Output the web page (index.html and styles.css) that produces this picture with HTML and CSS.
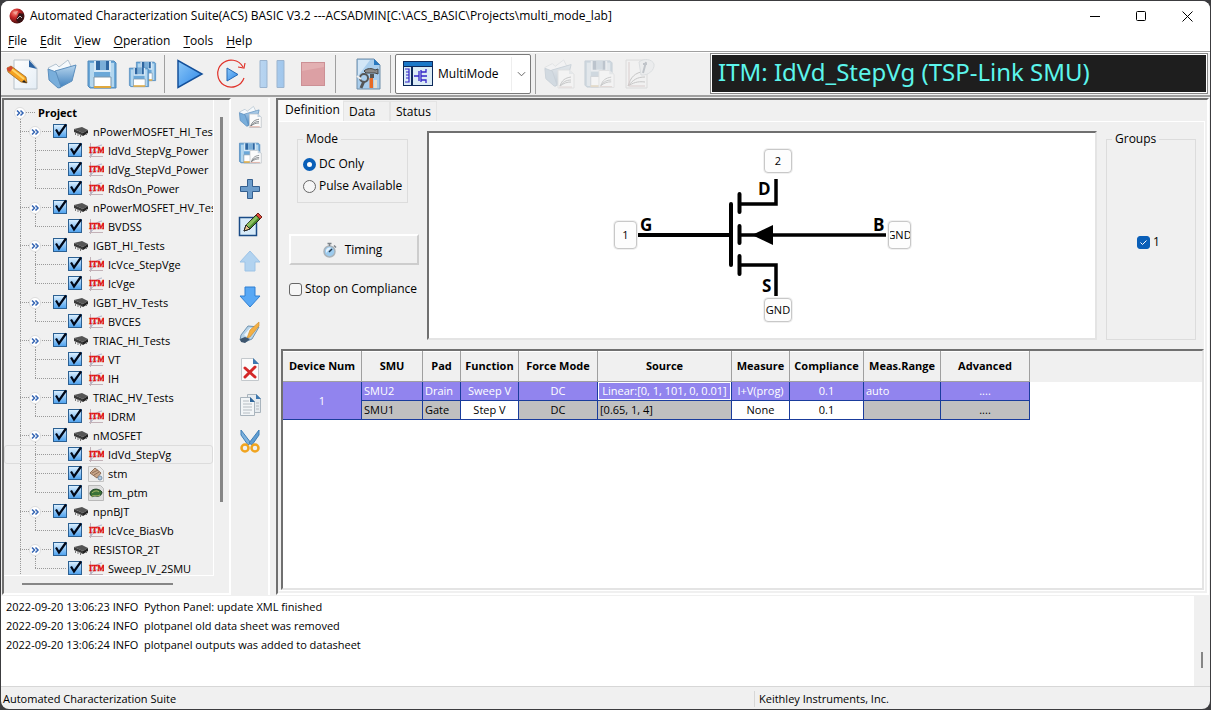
FILE: index.html
```html
<!DOCTYPE html>
<html lang="en">
<head>
<meta charset="utf-8">
<title>Automated Characterization Suite(ACS) BASIC V3.2</title>
<link rel="stylesheet" href="styles.css">
</head>
<body>
<svg class="defs" aria-hidden="true">
  <defs>
    <linearGradient id="gBlue" x1="0" y1="0" x2="1" y2="1"><stop offset="0" stop-color="#8cc8f8"/><stop offset="1" stop-color="#2c86e8"/></linearGradient>
    <linearGradient id="gSteel" x1="0" y1="0" x2="0" y2="1"><stop offset="0" stop-color="#b8d6ee"/><stop offset="1" stop-color="#3d7fbd"/></linearGradient>
    <linearGradient id="gPale" x1="0" y1="0" x2="1" y2="0"><stop offset="0" stop-color="#b9d5f0"/><stop offset="1" stop-color="#a0c6ec"/></linearGradient>
    <linearGradient id="gPaper" x1="0" y1="0" x2="1" y2="1"><stop offset="0" stop-color="#ffffff"/><stop offset="1" stop-color="#e4edf5"/></linearGradient>
    <radialGradient id="gBall" cx=".35" cy=".3" r=".8"><stop offset="0" stop-color="#ff8a7a"/><stop offset=".4" stop-color="#c52626"/><stop offset="1" stop-color="#2a0808"/></radialGradient>
  </defs>
  <symbol id="floppy" viewBox="0 0 32 32">
    <path d="M2 3h26l2 2v25H4l-2-2z" fill="#6ba8d8" stroke="#4f88bb"/>
    <path d="M4 5h4v24H5l-1-1zM24 5h4v24h-4z" fill="#b4d7ef"/>
    <path d="M8 3h17v11H8z" fill="#d5e8f6"/><path d="M10 3h4v9h-4zM20 3h3v9h-3z" fill="#2e66a0"/><path d="M14 3h6v9h-6z" fill="#7aaed8"/>
    <path d="M8 19h17v11H8z" fill="#fff" stroke="#7c97ad"/><path d="M8 28h17v2H8z" fill="#e0a83c"/>
  </symbol>
  <symbol id="folder" viewBox="0 0 32 32">
    <path d="M2 10l8-4 3 3 9-7 4 8-12 16z" fill="#f5f9fc" stroke="#b4c3d0"/>
    <path d="M9 13l21-6-4 16-13 7z" fill="url(#gSteel)" stroke="#5c8fbe"/>
    <path d="M2 11l8 3 5 15-3 1-9-8z" fill="#79aedb" stroke="#5c8fbe"/>
  </symbol>
  <symbol id="curves" viewBox="0 0 18 20">
    <path d="M1 1h11l5 4v14H1z" fill="#fbfbfb" stroke="#b9bfc4"/><path d="M12 1v4h5z" fill="#c4d4e2"/>
    <path d="M3 17c2-6 5-8 11-9M3 17c3-4 6-6 11-6M3 17c4-3 7-4 11-4" fill="none" stroke="#666c72"/><path d="M2 18h13" stroke="#d99a8c"/>
  </symbol>
  <symbol id="folderCurves" viewBox="0 0 32 32"><use href="#folder" width="30" height="30"/><use href="#curves" x="14" y="11" width="18" height="20"/></symbol>
  <symbol id="floppyCurves" viewBox="0 0 32 32"><use href="#floppy" width="31" height="31"/><use href="#curves" x="15" y="11" width="17" height="20"/></symbol>
  <symbol id="expand" viewBox="0 0 12 12">
    <circle cx="6" cy="6" r="5.500" fill="#fff" stroke="#dcdcdc"/>
    <path d="M3 3.500L5.500 6 3 8.500M6.500 3.500L9 6 6.500 8.500" fill="none" stroke="#3566b4" stroke-width="1.500"/>
  </symbol>
  <symbol id="chip" viewBox="0 0 16 12">
    <path d="M1 3l8-2 6 3-5 3z" fill="#555"/><path d="M1 3l9 4v3L1 6z" fill="#3a3a3a"/><path d="M10 7l5-3v3l-5 3z" fill="#222"/>
    <path d="M2.500 6v3M5 7v3M7.500 8v3M13.500 7v2" stroke="#777"/>
  </symbol>
  <symbol id="itm" viewBox="0 0 16 16">
    <path d="M2.500 0v15M1 13.500h14" stroke="#c3b2b8"/><path d="M3 13C5 6 8 3 14 2M3 13c4-5 7-5 12-5" fill="none" stroke="#b4b4c8"/>
    <text x="1" y="10" class="itm-text">ITM</text>
  </symbol>
  <symbol id="stm" viewBox="0 0 16 16"><path d="M.5.5h11l4 4v11H.5z" fill="#ececec" stroke="#c4c4c4"/><path d="M7 2l6 5-4 5-7-5z" fill="#c8a68a" stroke="#8f6e57"/><path d="M4 7l6-3M6 9l5-3" stroke="#8f6e57"/><circle cx="12" cy="12" r="2" fill="#b8cadc" stroke="#7793ae"/></symbol>
  <symbol id="ptm" viewBox="0 0 16 16"><path d="M.5.5h12l3 3v12H.5z" fill="#dedede" stroke="#b8b8b8"/><path d="M2 9c0-5 8-7 12-2 0 3-3 5-6 4-2 0-3 0-4 1z" fill="#3b7237" stroke="#1f3f25"/><path d="M4 8c2-2 5-3 7-1M3 12c3-3 6 0 9-2" fill="none" stroke="#b5bf6c"/></symbol>
</svg>

<div class="window">
  <header class="titlebar">
    <svg class="app-icon" viewBox="0 0 16 16"><circle cx="8" cy="8" r="7.500" fill="url(#gBall)"/><path d="M10 5l5 1-1 6-4 3-3-3z" fill="#331214"/><path d="M4 4l5-1-2 4z" fill="#f0a397"/><path d="M8 11l3-3 2 2" stroke="#bbb" fill="none"/></svg>
    <h1 class="title">Automated Characterization Suite(ACS) BASIC V3.2 ---ACSADMIN[C:\ACS_BASIC\Projects\multi_mode_lab]</h1>
    <div class="controls">
      <button class="control" aria-label="Minimize"><svg viewBox="0 0 11 11"><path d="M0 5.500h10"/></svg></button>
      <button class="control" aria-label="Maximize"><svg viewBox="0 0 11 11"><rect x=".5" y=".5" width="9" height="9" rx="1"/></svg></button>
      <button class="control" aria-label="Close"><svg viewBox="0 0 11 11"><path d="M.5.5l10 10M10.500.5l-10 10"/></svg></button>
    </div>
  </header>

  <nav class="menubar">
    <button class="menu"><u>F</u>ile</button>
    <button class="menu"><u>E</u>dit</button>
    <button class="menu"><u>V</u>iew</button>
    <button class="menu"><u>O</u>peration</button>
    <button class="menu"><u>T</u>ools</button>
    <button class="menu"><u>H</u>elp</button>
  </nav>

  <div class="toolbar">
    <div class="tools files">
      <button class="tool" aria-label="New"><svg viewBox="0 0 32 32"><path d="M8 2h16l7 8v21H8z" fill="url(#gPaper)" stroke="#b8c2ca"/><path d="M23 2l8 9-8-2z" fill="#2b62a0"/><path d="M1 10l4-2 15 11 1 6-6-1L2 14z" fill="#f5a11f" stroke="#7b4a10" stroke-width=".6"/><path d="M3 9l15 12" stroke="#ffd569" stroke-width="2"/><path d="M1 10l4-2 2 2-3 4-3-2z" fill="#d14a32"/><path d="M18 22l3 3-5-1z" fill="#222"/></svg></button>
      <button class="tool" aria-label="Open"><svg><use href="#folder"/></svg></button>
      <button class="tool" aria-label="Save"><svg><use href="#floppy"/></svg></button>
      <button class="tool" aria-label="Save all"><svg viewBox="0 0 32 32"><use href="#floppy" x="9" y="1" width="22" height="24"/><use href="#floppy" x="2" y="7" width="22" height="24"/></svg></button>
    </div>
    <div class="tools">
      <button class="tool" aria-label="Run"><svg viewBox="0 0 32 32"><path d="M4 2.500v27L28 16z" fill="url(#gBlue)" stroke="#14509a" stroke-width="1.500"/></svg></button>
      <button class="tool" aria-label="Repeat run"><svg viewBox="0 0 32 32"><path d="M28 9A13.500 13.500 0 1 0 29 20" fill="none" stroke="#e0342c" stroke-width="1.200"/><path d="M30 5l-1 5-6-1" fill="none" stroke="#e0342c" stroke-width="1.200"/><path d="M12 10v13l11-6.500z" fill="url(#gBlue)" stroke="#2468b4"/></svg></button>
      <button class="tool" aria-label="Pause"><svg viewBox="0 0 32 32"><path d="M4 2.500h7v27H4zM21 2.500h7v27h-7z" fill="url(#gPale)" stroke="#9bb4cf"/></svg></button>
      <button class="tool" aria-label="Stop"><svg viewBox="0 0 32 32"><rect x="4.500" y="4.500" width="23" height="23" fill="#dca0a4" stroke="#cc9095"/><path d="M5 13l22-4V5H5z" fill="#e3b0b2"/></svg></button>
    </div>
    <div class="tools setup">
      <button class="tool" aria-label="Preferences"><svg viewBox="0 0 32 32"><path d="M5 1h17l6 6v24H5z" fill="#a9cdec" stroke="#6f8da8"/><path d="M22 1v6h6z" fill="#2878c0"/><path d="M6 2h12L6 18z" fill="#d3e6f6"/><path d="M12 13c3-3 8-3 11-1l3-1v5l-3-1h-9z" fill="#8a8a8a" stroke="#444"/><path d="M18 16h4v4h-4z" fill="#555"/><path d="M17.500 20h3.500v10h-3.500z" fill="#e86b26"/><path d="M22 22h3v8h-3z" fill="#e8e0d0"/><circle cx="12" cy="20" r="4" fill="none" stroke="#555" stroke-width="2"/><path d="M12 23l-3 7" stroke="#555" stroke-width="3"/><path d="M5 18l4 3" stroke="#eee" stroke-width="2"/></svg></button>
    </div>
    <div class="mode-box">
      <label class="mode-picker">
        <svg class="mode-icon" viewBox="0 0 30 25"><rect x="0" y="0" width="30" height="25" fill="#0d2a5c"/><rect x="1" y="1" width="28" height="4" fill="#1b78c8"/><path d="M1 6h7v18H1zM10 6h19v18H10z" fill="#dcecf6"/><path d="M2 8h4v3H3h3v3H3h3v3H3h3v4H2" fill="none" stroke="#3327c8" stroke-width="1.200"/><path d="M11 15h5M16 10v10M18 9v12M18 11h5V8M18 15h6M18 19h5v3" fill="none" stroke="#3327c8" stroke-width="1.300"/></svg>
        <select class="mode-select" aria-label="Test mode"><option>MultiMode</option></select>
        <svg class="chevron" viewBox="0 0 10 6"><path d="M1 1l4 4 4-4"/></svg>
      </label>
    </div>
    <div class="tools dim">
      <button class="tool" aria-label="Open plot" disabled><svg><use href="#folderCurves"/></svg></button>
      <button class="tool" aria-label="Save plot" disabled><svg><use href="#floppyCurves"/></svg></button>
      <button class="tool" aria-label="Edit plot" disabled><svg viewBox="0 0 32 32"><path d="M3 2h21v28H3z" fill="#f4f4f4" stroke="#aaa"/><path d="M5 28c3-9 6-13 17-15M5 28c5-6 9-9 17-9M5 28c5-3 9-5 17-4" fill="none" stroke="#666"/><path d="M6 4v24h16" stroke="#c77" fill="none"/><path d="M16 4c5-4 13-3 15 2 1 6-6 12-13 11z" fill="#dbe6ee" stroke="#a3b4c2"/><path d="M23 4l-3 11M20 6h4" stroke="#4a6480" stroke-width="2"/></svg></button>
    </div>
    <output class="banner">ITM: IdVd_StepVg (TSP-Link SMU)</output>
  </div>

  <main class="main">
    <section class="tree-panel">
      <div class="tree-view">
        <ul class="tree">
          <li class="row root"><svg class="expand"><use href="#expand"/></svg><span>Project</span></li>
          <li class="row group"><svg class="expand"><use href="#expand"/></svg><label class="node"><input type="checkbox" class="tick" checked><svg class="icon"><use href="#chip"/></svg>nPowerMOSFET_HI_Tests</label></li>
          <li class="row leaf"><label class="node"><input type="checkbox" class="tick" checked><svg class="icon"><use href="#itm"/></svg>IdVd_StepVg_Power</label></li>
          <li class="row leaf"><label class="node"><input type="checkbox" class="tick" checked><svg class="icon"><use href="#itm"/></svg>IdVg_StepVd_Power</label></li>
          <li class="row leaf last"><label class="node"><input type="checkbox" class="tick" checked><svg class="icon"><use href="#itm"/></svg>RdsOn_Power</label></li>
          <li class="row group"><svg class="expand"><use href="#expand"/></svg><label class="node"><input type="checkbox" class="tick" checked><svg class="icon"><use href="#chip"/></svg>nPowerMOSFET_HV_Tests</label></li>
          <li class="row leaf last"><label class="node"><input type="checkbox" class="tick" checked><svg class="icon"><use href="#itm"/></svg>BVDSS</label></li>
          <li class="row group"><svg class="expand"><use href="#expand"/></svg><label class="node"><input type="checkbox" class="tick" checked><svg class="icon"><use href="#chip"/></svg>IGBT_HI_Tests</label></li>
          <li class="row leaf"><label class="node"><input type="checkbox" class="tick" checked><svg class="icon"><use href="#itm"/></svg>IcVce_StepVge</label></li>
          <li class="row leaf last"><label class="node"><input type="checkbox" class="tick" checked><svg class="icon"><use href="#itm"/></svg>IcVge</label></li>
          <li class="row group"><svg class="expand"><use href="#expand"/></svg><label class="node"><input type="checkbox" class="tick" checked><svg class="icon"><use href="#chip"/></svg>IGBT_HV_Tests</label></li>
          <li class="row leaf last"><label class="node"><input type="checkbox" class="tick" checked><svg class="icon"><use href="#itm"/></svg>BVCES</label></li>
          <li class="row group"><svg class="expand"><use href="#expand"/></svg><label class="node"><input type="checkbox" class="tick" checked><svg class="icon"><use href="#chip"/></svg>TRIAC_HI_Tests</label></li>
          <li class="row leaf"><label class="node"><input type="checkbox" class="tick" checked><svg class="icon"><use href="#itm"/></svg>VT</label></li>
          <li class="row leaf last"><label class="node"><input type="checkbox" class="tick" checked><svg class="icon"><use href="#itm"/></svg>IH</label></li>
          <li class="row group"><svg class="expand"><use href="#expand"/></svg><label class="node"><input type="checkbox" class="tick" checked><svg class="icon"><use href="#chip"/></svg>TRIAC_HV_Tests</label></li>
          <li class="row leaf last"><label class="node"><input type="checkbox" class="tick" checked><svg class="icon"><use href="#itm"/></svg>IDRM</label></li>
          <li class="row group"><svg class="expand"><use href="#expand"/></svg><label class="node"><input type="checkbox" class="tick" checked><svg class="icon"><use href="#chip"/></svg>nMOSFET</label></li>
          <li class="row leaf selected"><label class="node"><input type="checkbox" class="tick" checked><svg class="icon"><use href="#itm"/></svg>IdVd_StepVg</label></li>
          <li class="row leaf"><label class="node"><input type="checkbox" class="tick" checked><svg class="icon"><use href="#stm"/></svg>stm</label></li>
          <li class="row leaf last"><label class="node"><input type="checkbox" class="tick" checked><svg class="icon"><use href="#ptm"/></svg>tm_ptm</label></li>
          <li class="row group"><svg class="expand"><use href="#expand"/></svg><label class="node"><input type="checkbox" class="tick" checked><svg class="icon"><use href="#chip"/></svg>npnBJT</label></li>
          <li class="row leaf last"><label class="node"><input type="checkbox" class="tick" checked><svg class="icon"><use href="#itm"/></svg>IcVce_BiasVb</label></li>
          <li class="row group"><svg class="expand"><use href="#expand"/></svg><label class="node"><input type="checkbox" class="tick" checked><svg class="icon"><use href="#chip"/></svg>RESISTOR_2T</label></li>
          <li class="row leaf last"><label class="node"><input type="checkbox" class="tick" checked><svg class="icon"><use href="#itm"/></svg>Sweep_IV_2SMU</label></li>
        </ul>
      </div>
      <div class="vscroll"><div class="vthumb"></div></div>
      <div class="hscroll"><div class="hthumb"></div></div>
    </section>

    <aside class="side-tools">
      <button class="side-tool" aria-label="Import"><svg><use href="#folderCurves"/></svg></button>
      <button class="side-tool" aria-label="Export"><svg><use href="#floppyCurves"/></svg></button>
      <button class="side-tool" aria-label="Add"><svg viewBox="0 0 24 24"><path d="M9.500 2.500h5v7h7v5h-7v7h-5v-7h-7v-5h7z" fill="#6d9dcb" stroke="#345f8f"/></svg></button>
      <button class="side-tool" aria-label="Rename"><svg viewBox="0 0 24 24"><path d="M1.500 4.500h17v18h-17z" fill="#d8ebf9" stroke="#1a4b86" stroke-width="1.500"/><path d="M6 18l2-6L19 1l4 4-11 11z" fill="#4a8c2c" stroke="#222"/><path d="M8 12L18 3l2 2-10 10z" fill="#8cc060"/><path d="M18 2l2-2 4 4-2 2z" fill="#dd4b38" stroke="#702018"/><path d="M6 18l2-6 4 4z" fill="#edc991" stroke="#222"/></svg></button>
      <button class="side-tool" aria-label="Move up"><svg viewBox="0 0 24 24"><path d="M12 2l10 11h-5v9H7v-9H2z" fill="#b2d3f0" stroke="#9dc3e6"/></svg></button>
      <button class="side-tool" aria-label="Move down"><svg viewBox="0 0 24 24"><path d="M12 22L2 11h5V2h10v9h5z" fill="#58a8f5" stroke="#2f7fd2"/></svg></button>
      <button class="side-tool" aria-label="Clear"><svg viewBox="0 0 24 24"><path d="M3 14l7-9 11 1-7 12-7 3-5-2z" fill="#b7d3e8" stroke="#6f93b0"/><path d="M6 14l6-7 5 1-6 9z" fill="#eef6fc"/><path d="M9 17l3-8 9-8v4l-9 11z" fill="#f4b044" stroke="#c98a2c" stroke-width=".6"/><path d="M2 18l5-2 5 2-5 4-4-1z" fill="#3e566e"/></svg></button>
      <button class="side-tool" aria-label="Delete"><svg viewBox="0 0 24 24"><path d="M3.500 1.500h12l5 5v17h-17z" fill="#fbfbfb" stroke="#c3c8cc"/><path d="M15 1v6h6z" fill="#3d78b0"/><path d="M7 11l10 9M17 10L7 20" stroke="#d42828" stroke-width="3" stroke-linecap="round"/></svg></button>
      <button class="side-tool" aria-label="Copy"><svg viewBox="0 0 24 24"><path d="M9.500 1.500h9l4 4v14h-13z" fill="#e6ebef" stroke="#a9b4bd"/><path d="M18 1v5h5z" fill="#3d78b0"/><path d="M2.500 4.500h10l4 4v14h-14z" fill="#f2f5f7" stroke="#a9b4bd"/><path d="M12 4v5h5z" fill="#2d659b"/><path d="M5 8h6M5 11h9M5 14h9M5 17h9M5 20h7M18 10h3M18 13h3M18 16h3" stroke="#b5bcc2"/></svg></button>
      <button class="side-tool" aria-label="Cut"><svg viewBox="0 0 24 24"><path d="M3 1l10 13-3 2L3 6z" fill="#7db2de" stroke="#3f7fb8"/><path d="M21 1L11 14l3 2 7-10z" fill="#5f9dd2" stroke="#3f7fb8"/><circle cx="7" cy="19" r="3.500" fill="none" stroke="#f0a420" stroke-width="2.500"/><circle cx="17" cy="19" r="3.500" fill="none" stroke="#f0a420" stroke-width="2.500"/></svg></button>
    </aside>

    <section class="editor">
      <div class="tabs" role="tablist">
        <button class="tab active" role="tab" aria-selected="true">Definition</button>
        <button class="tab" role="tab">Data</button>
        <button class="tab" role="tab">Status</button>
      </div>
      <div class="page">
        <div class="setup-row">
          <form class="options">
            <fieldset class="mode">
              <legend>Mode</legend>
              <label class="choice"><input type="radio" name="mode" class="radio" checked>DC Only</label>
              <label class="choice"><input type="radio" name="mode" class="radio">Pulse Available</label>
            </fieldset>
            <button type="button" class="timing"><svg viewBox="0 0 16 16"><circle cx="7.500" cy="9.500" r="5.500" fill="#9ccbee" stroke="#a9b2b9" stroke-width="1.500"/><path d="M5.500 1.500h4M7.500 2v2M12 3.500l2 2" stroke="#7b8288" stroke-width="1.500"/><path d="M4 8c1-2 3-3 5-2l-5 5z" fill="#e2f0fb"/><path d="M7 10l3-3" stroke="#24384c" stroke-width="1.500"/></svg>Timing</button>
            <label class="choice stop"><input type="checkbox" class="check">Stop on Compliance</label>
          </form>
          <div class="canvas">
            <div class="device">
              <svg class="schematic" viewBox="0 0 300 176">
                <g fill="none" stroke="#000" stroke-width="4">
                  <path d="M26 88h91"/>
                  <path d="M119 57v61M127.500 47v18M127.500 79v17M127.500 109v18" stroke-linecap="round"/>
                  <path d="M128 57h36V32M128 88h146M128 118h36v31" stroke-width="3.500"/>
                </g>
                <path d="M140 88l21-10v20z"/>
                <g class="terminal"><text x="146" y="48">D</text><text x="28" y="84">G</text><text x="261" y="84">B</text><text x="150" y="145">S</text></g>
              </svg>
              <button class="pin drain">2</button>
              <button class="pin gate">1</button>
              <button class="pin bulk"><span>GND</span></button>
              <button class="pin source">GND</button>
            </div>
          </div>
          <fieldset class="groups">
            <legend>Groups</legend>
            <label class="choice"><input type="checkbox" class="check" checked>1</label>
          </fieldset>
        </div>
        <div class="grid-panel">
          <div class="grid-head"></div>
          <table class="smu">
            <colgroup><col class="w-device"><col class="w-smu"><col class="w-pad"><col class="w-func"><col class="w-force"><col class="w-source"><col class="w-func"><col class="w-comp"><col class="w-range"><col class="w-adv"></colgroup>
            <thead><tr><th>Device Num</th><th>SMU</th><th>Pad</th><th>Function</th><th>Force Mode</th><th>Source</th><th>Measure</th><th>Compliance</th><th>Meas.Range</th><th>Advanced</th></tr></thead>
            <tbody>
              <tr class="current"><td rowspan="2">1</td><td class="text">SMU2</td><td class="text">Drain</td><td>Sweep V</td><td>DC</td><td class="cursor">Linear:[0, 1, 101, 0, 0.01]</td><td>I+V(prog)</td><td>0.1</td><td class="text">auto</td><td>....</td></tr>
              <tr><td class="text">SMU1</td><td class="text">Gate</td><td class="open">Step V</td><td>DC</td><td class="text">[0.65, 1, 4]</td><td class="open">None</td><td class="open">0.1</td><td></td><td>....</td></tr>
            </tbody>
          </table>
        </div>
      </div>
    </section>
  </main>

  <section class="log">
    <div class="log-view">
      <ul class="log-lines">
        <li>2022-09-20 13:06:23 INFO&nbsp; Python Panel: update XML finished</li>
        <li>2022-09-20 13:06:24 INFO&nbsp; plotpanel old data sheet was removed</li>
        <li>2022-09-20 13:06:24 INFO&nbsp; plotpanel outputs was added to datasheet</li>
      </ul>
    </div>
    <div class="log-scroll"><div class="log-thumb"></div></div>
  </section>

  <footer class="statusbar">
    <span>Automated Characterization Suite</span>
    <span class="vendor">Keithley Instruments, Inc.</span>
  </footer>
</div>
</body>
</html>
```
FILE: styles.css
```css
* { box-sizing: border-box; }
body {
  margin: 0;
  padding: 1px;
  height: 100vh;
  background: #3c3c3f;
  color: #000;
  font: 12px/16px "Open Sans", "Noto Sans", sans-serif;
}
button, select, input { font: inherit; color: inherit; margin: 0; }
button { padding: 0; border: 0; background: none; }
ul { margin: 0; padding: 0; list-style: none; }
.defs { position: absolute; width: 0; height: 0; }
.window {
  height: 100%;
  display: flex;
  flex-direction: column;
  background: #f0f0f0;
  border-radius: 8px;
  overflow: hidden;
}

.titlebar { display: flex; align-items: center; height: 30px; padding-left: 8px; background: #fff; }
.app-icon { width: 16px; height: 16px; margin-right: 5px; }
.title { flex: 1; margin: 0; font-size: 12px; font-weight: 400; white-space: nowrap; }
.controls { display: flex; }
.control { width: 46px; height: 28px; }
.control svg { width: 11px; height: 11px; fill: none; stroke: #000; vertical-align: middle; }

.menubar { display: flex; gap: 13px; height: 20px; padding-left: 7px; background: #fff; }
.menu u { text-underline-offset: 2px; }

.toolbar {
  display: flex;
  align-items: center;
  height: 46px;
  border-top: 1px solid #a0a0a0;
  border-bottom: 2px solid #a0a0a0;
  padding: 0 2px 0 1px;
  box-shadow: inset 0 1px #fff;
}
.tools { display: flex; align-items: center; height: 38px; border-right: 1px solid #a0a0a0; padding-right: 2px; margin-right: 4px; }
.tool { width: 41px; height: 38px; }
.files .tool { width: 40px; }
.tool svg { width: 32px; height: 32px; display: block; margin: auto; }
.setup { padding-left: 7px; }
.mode-box { border-right: 1px solid #a0a0a0; padding: 0 4px 0 0; margin-right: 3px; }
.mode-picker { display: flex; align-items: center; width: 136px; height: 40px; padding: 0 4px 0 7px; border: 1px solid #7a7a7a; border-radius: 2px; background: #fff; }
.mode-icon { width: 30px; height: 25px; margin-right: 5px; }
.mode-select { flex: 1; min-width: 0; height: 34px; padding: 0; border: 0; border-right: 1px solid #eee; background: none; appearance: none; }
.chevron { width: 9px; height: 6px; margin-left: 5px; fill: none; stroke: #555; }
.dim { border: 0; }
.dim .tool { width: 40px; opacity: .3; filter: grayscale(.5); }
.banner {
  width: 498px;
  height: 41px;
  margin-left: auto;
  padding: 0 7px;
  border: 1px solid #888;
  box-shadow: inset 0 0 0 1px #fff;
  background: #1e1e1e;
  color: #5cf5ec;
  font: 24px/36px "Noto Sans", sans-serif;
  white-space: nowrap;
}

.main { flex: 1; min-height: 0; display: flex; padding: 1px; }
.tree-panel {
  width: 229px;
  display: grid;
  grid-template: minmax(0, 1fr) 17px / minmax(0, 1fr) 15px;
  border: 2px solid;
  border-color: #707070 #fff #fff #707070;
}
.tree-view { overflow: hidden; padding-top: 3px; border-right: 1px solid #fff; border-bottom: 1px solid #fff; }
.row {
  height: 19px;
  display: flex;
  align-items: center;
  font-size: 11px;
  white-space: nowrap;
  --dots-v: repeating-linear-gradient(#999 0 1px, transparent 1px 2px);
  --dots-h: repeating-linear-gradient(90deg, #999 0 1px, transparent 1px 2px);
}
.root { padding-left: 10px; gap: 12px; font-weight: 700; background: var(--dots-h) 16px 9px / 16px 1px no-repeat, var(--dots-v) 16px 10px / 1px 9px no-repeat; }
.group { padding-left: 25px; gap: 12px; background: var(--dots-v) 16px 0 / 1px 19px no-repeat, var(--dots-h) 16px 9px / 32px 1px no-repeat, var(--dots-v) 31px 10px / 1px 9px no-repeat; }
.leaf { padding-left: 64px; background: var(--dots-v) 16px 0 / 1px 19px no-repeat, var(--dots-h) 31px 9px / 32px 1px no-repeat, var(--dots-v) 31px 0 / 1px 19px no-repeat; }
.leaf.last { background-size: 1px 19px, 32px 1px, 1px 9px; }
.selected { border-radius: 3px; box-shadow: inset 0 0 0 1px #dcdcdc; }
.expand { width: 12px; height: 12px; flex: none; }
.node { display: flex; align-items: center; }
.tick {
  appearance: none;
  width: 17px;
  height: 17px;
  flex: none;
  margin-right: 3px;
  background: url("data:image/svg+xml,%3Csvg xmlns='http://www.w3.org/2000/svg' viewBox='0 0 17 17'%3E%3ClinearGradient id='g' x2='0' y2='1'%3E%3Cstop stop-color='%23e0f2ff'/%3E%3Cstop offset='1' stop-color='%234ba0ee'/%3E%3C/linearGradient%3E%3Crect x='.5' y='1.500' width='13' height='13' fill='url(%23g)' stroke='%232c6092'/%3E%3Cpath d='M3 6.500l3 5 7-10' fill='none' stroke='%23000818' stroke-width='2.200'/%3E%3C/svg%3E") no-repeat;
}
.icon { width: 16px; height: 16px; margin-right: 4px; flex: none; }
.itm-text { font: 700 8px "Liberation Serif", serif; fill: #e01010; stroke: #e01010; stroke-width: .4px; }
.vscroll { padding: 17px 0 74px 6px; }
.vthumb { width: 3px; height: 100%; background: #868686; }
.hscroll { grid-column: 1 / -1; padding: 7px 0 0 18px; }
.hthumb { width: 151px; height: 2px; background: #868686; }

.side-tools { width: 39px; padding-top: 1px; display: flex; flex-direction: column; border-right: 2px solid #fff; }
.side-tool { height: 36px; }
.side-tool svg { width: 24px; height: 24px; display: block; margin: auto; }

.editor { flex: 1; min-width: 0; display: flex; flex-direction: column; margin-left: 6px; border: 2px solid; border-color: #707070 #fff #fff #707070; padding: 0 2px 2px 1px; }
.tabs { display: flex; align-items: flex-end; height: 21px; }
.tab { height: 20px; padding: 0 5px; border: 1px solid #e4e4e4; border-bottom: 0; text-align: left; width: 47px; }
.tab.active { height: 21px; width: 64px; padding-bottom: 2px; border-color: #fafafa; background: #f9f9f9; }
.page { flex: 1; min-height: 0; display: flex; flex-direction: column; gap: 9px; padding: 9px 0 0 2px; border: 1px solid #fff; border-width: 1px 1px 1px 0; }
.setup-row { display: flex; gap: 9px; }
.options { width: 137px; padding-left: 8px; display: flex; flex-direction: column; align-items: flex-start; }
fieldset { margin: 0; border: 1px solid #dcdcdc; min-width: 0; }
legend { padding: 0 3px; }
.mode { width: 111px; height: 72px; margin-left: 8px; padding: 6px 5px 0; }
.choice { display: flex; align-items: center; gap: 3px; white-space: nowrap; }
.mode .choice { height: 22px; }
.radio, .check { appearance: none; width: 13px; height: 13px; flex: none; border: 1px solid #666; background: #f6f6f6; }
.radio { border-radius: 50%; }
.radio:checked { border: 4px solid #0a5fb8; background: #fff; }
.check { border-radius: 3px; }
.check:checked { border-color: #0a5fb8; background: #0a5fb8 url("data:image/svg+xml,%3Csvg xmlns='http://www.w3.org/2000/svg' viewBox='0 0 11 11'%3E%3Cpath d='M2.500 5.500l2 2 4-4' fill='none' stroke='white'/%3E%3C/svg%3E"); }
.timing { display: flex; align-items: center; justify-content: center; gap: 7px; width: 130px; height: 31px; margin: 31px 0 16px; padding-right: 4px; border: 2px solid; border-color: #fff #cdcdcd #cdcdcd #fff; }
.timing svg { width: 16px; height: 16px; }
.stop { height: 16px; }
.canvas { flex: 1; height: 209px; display: flex; align-items: center; justify-content: center; padding-bottom: 2px; background: #fff; border: 2px solid; border-color: #707070 #e4e4e4 #e4e4e4 #707070; }
.device { position: relative; width: 300px; height: 176px; }
.schematic { display: block; width: 300px; height: 176px; }
.terminal { font: 700 17px "Open Sans", sans-serif; }
.pin { position: absolute; width: 28px; height: 24px; border: 1px solid #c8c8c8; border-radius: 4px; background: #fdfdfd; box-shadow: 0 0 0 1px #f0f0f0; font-size: 11px; display: flex; align-items: center; justify-content: center; overflow: hidden; }
.drain { left: 152px; top: 2px; }
.source { left: 152px; top: 151px; }
.gate, .bulk { width: 23px; height: 28px; top: 74px; }
.gate { left: 2px; }
.bulk { left: 276px; }
.bulk span { width: 20px; display: flex; justify-content: center; overflow: hidden; }
.groups { width: 90px; padding: 0; margin-right: 8px; }
.groups legend { margin-left: 5px; }
.groups .choice { height: 100%; padding: 0 0 2px 30px; }

.grid-panel { flex: 1; min-height: 0; display: grid; align-items: start; background: #fff; border: 2px solid; border-color: #707070 #e4e4e4 #e4e4e4 #707070; }
.grid-head, .smu { grid-area: 1 / 1; }
.grid-head { height: 31px; background: #f0f0f0; }
.smu { width: 747px; table-layout: fixed; border-collapse: separate; border-spacing: 0; text-align: center; white-space: nowrap; font-size: 11px; }
.w-device { width: 79px; }
.w-smu { width: 61px; }
.w-pad { width: 38px; }
.w-func { width: 58px; }
.w-force { width: 79px; }
.w-source { width: 134px; }
.w-comp { width: 74px; }
.w-range { width: 77px; }
.w-adv { width: 89px; }
.smu th { height: 31px; padding: 0; font-weight: 700; border-right: 1px solid #a0a0a0; border-bottom: 1px solid #a0a0a0; box-shadow: inset 0 1px #fff; }
.smu td { height: 19px; padding: 0; line-height: 16px; background: #c0c0c0; border-right: 1px solid #1a3c9c; border-bottom: 1px solid #1a3c9c; }
.smu .current td { background: #9184ee; color: #fff; }
.smu .text { text-align: left; padding-left: 2px; }
.smu .open { background: #fff; }
.smu .cursor { box-shadow: inset 0 0 0 1px #fff; }

.log { display: flex; height: 90px; background: #fff; padding-top: 6px; font-size: 11px; }
.log-view { flex: 1; overflow: hidden; padding-left: 5px; }
.log-lines { margin-top: -5px; line-height: 19px; }
.log-scroll { width: 16px; margin-top: -6px; padding: 56px 0 0 7px; background: #f0f0f0; }
.log-thumb { width: 2px; height: 16px; background: #868686; }

.statusbar { display: grid; grid-template-columns: 753px 1fr; align-items: center; height: 23px; padding-top: 1px; border-top: 1px solid #d7d7d7; font-size: 11px; }
.statusbar span { padding-left: 2px; }
.statusbar .vendor { padding-left: 4px; border-left: 1px solid #d7d7d7; }
```
